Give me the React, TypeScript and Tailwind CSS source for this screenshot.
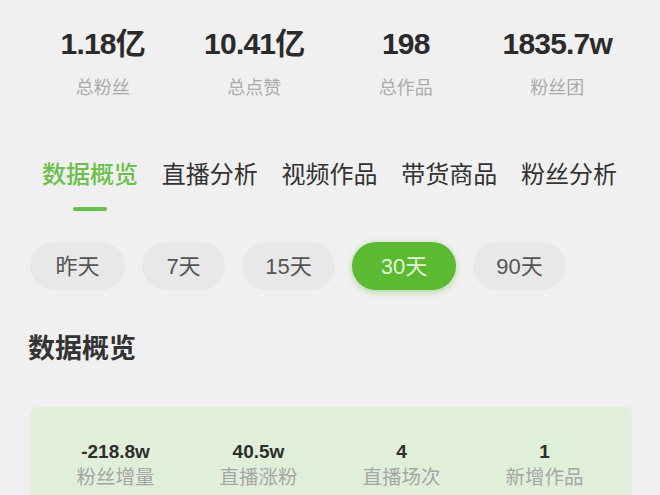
const totals = [
  { value: '1.18亿', label: '总粉丝' },
  { value: '10.41亿', label: '总点赞' },
  { value: '198', label: '总作品' },
  { value: '1835.7w', label: '粉丝团' },
];

const tabs = ['数据概览', '直播分析', '视频作品', '带货商品', '粉丝分析'];

const ranges = [
  { label: '昨天', width: 'w-[95px]' },
  { label: '7天', width: 'w-[83px]' },
  { label: '15天', width: 'w-[93px]' },
  { label: '30天', width: 'w-[104px]' },
  { label: '90天', width: 'w-[93px]' },
];

const overview = [
  { value: '-218.8w', label: '粉丝增量' },
  { value: '40.5w', label: '直播涨粉' },
  { value: '4', label: '直播场次' },
  { value: '1', label: '新增作品' },
];

const numFont = "font-['Liberation_Sans','Noto_Sans_CJK_SC',sans-serif]";
const cjkFont = "font-['Noto_Sans_CJK_SC',sans-serif]";

export default function App() {
  const activeTab = 0;
  const activeRange = 3;

  return (
    <div className={`w-[660px] h-[495px] overflow-hidden bg-[#f0f0f0] ${cjkFont}`}>
      {/* 账号总览 */}
      <div className="grid grid-cols-4 px-[27px] pt-[29px]">
        {totals.map((t) => (
          <div key={t.label} className="flex flex-col items-center">
            <span className={`${numFont} text-[30px] leading-[30px] font-bold text-[#2b2b2b] tracking-[-0.8px]`}>
              {t.value}
            </span>
            <span className="mt-[18px] text-[18px] leading-[18px] text-[#ababab]">{t.label}</span>
          </div>
        ))}
      </div>

      {/* Tabs */}
      <div className="mt-[66px] flex justify-between pl-[42px] pr-[43px] border-b border-[#ebebeb]">
        {tabs.map((tab, i) => (
          <div key={tab} className="flex flex-col items-center">
            <span
              className={`text-[24px] leading-[24px] ${
                i === activeTab ? 'text-[#6cbf4a] font-medium' : 'text-[#333333]'
              }`}
            >
              {tab}
            </span>
            <span
              className={`mt-[22px] h-[4px] w-[34px] rounded-full ${
                i === activeTab ? 'bg-[#6cbf4a]' : 'bg-transparent'
              }`}
            ></span>
          </div>
        ))}
      </div>

      {/* 时间范围 */}
      <div className="mt-[30px] flex gap-[17px] pl-[30px]">
        {ranges.map((r, i) => (
          <div
            key={r.label}
            className={`${r.width} h-[48px] rounded-full flex items-center justify-center ${numFont} text-[22px] ${
              i === activeRange
                ? 'bg-[#5cb932] text-[#e4f8d6] shadow-[0_2px_6px_rgba(92,185,50,0.45)]'
                : 'bg-[#e8e8e8] text-[#555555]'
            }`}
          >
            {r.label}
          </div>
        ))}
      </div>

      {/* 数据概览 */}
      <h2 className="mt-[43px] pl-[28px] text-[27px] leading-[27px] font-bold text-[#333333]">数据概览</h2>

      <div className="mt-[47px] mx-[30px] w-[602px] h-[120px] rounded-t-[6px] bg-[#e0efda] grid grid-cols-4 pl-[14px] pr-[16px] pt-[35px] content-start">
        {overview.map((o) => (
          <div key={o.label} className="flex flex-col items-center">
            <span className={`${numFont} text-[19px] leading-[19px] font-bold text-[#2e2e2e]`}>{o.value}</span>
            <span className="mt-[5px] text-[19.5px] leading-[20px] text-[#a6a6a6]">{o.label}</span>
          </div>
        ))}
      </div>
    </div>
  );
}
